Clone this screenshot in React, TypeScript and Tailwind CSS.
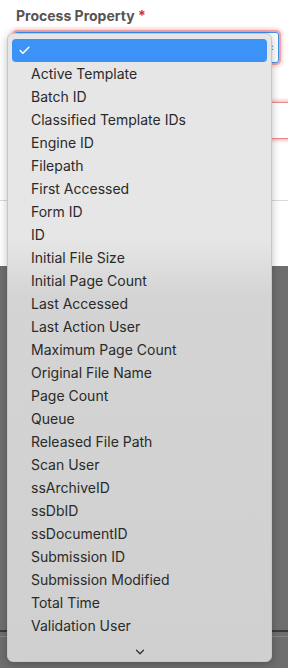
import { Check, ChevronDown } from "lucide-react";

const options = [
  "Active Template",
  "Batch ID",
  "Classified Template IDs",
  "Engine ID",
  "Filepath",
  "First Accessed",
  "Form ID",
  "ID",
  "Initial File Size",
  "Initial Page Count",
  "Last Accessed",
  "Last Action User",
  "Maximum Page Count",
  "Original File Name",
  "Page Count",
  "Queue",
  "Released File Path",
  "Scan User",
  "ssArchiveID",
  "ssDbID",
  "ssDocumentID",
  "Submission ID",
  "Submission Modified",
  "Total Time",
  "Validation User",
];

const App = () => {
  return (
    <div
      className="relative w-[288px] h-[668px] overflow-hidden bg-white flex flex-col"
      style={{ fontFamily: "Inter, 'Noto Sans', sans-serif" }}
    >
      {/* Form behind the menu */}
      <div className="flex flex-col">
        <div className="pt-[6px] pl-[16px] text-[14px] leading-[20px] font-bold text-[#555555]">
          Process Property <span className="text-[#e0302a]">*</span>
        </div>
        <div className="mt-[6px] ml-[14px] w-[265px] h-[31px] rounded-[3px] border border-[#3b8ef0] shadow-[0_0_0_2px_#f3a3a6,0_0_4px_3px_#f7c4c6] flex items-center justify-end pr-[3px]">
          <span className="text-[9px] text-[#333]">⬍</span>
        </div>
        <div className="mt-[39px] ml-[14px] w-[290px] h-[37px] border-y border-[#e98a8f] shadow-[0_0_3px_2px_#f7c4c6]" />
        <div className="mt-[61px] h-px bg-[#d9d9d9]" />
      </div>
      <div className="h-[65px] bg-white" />
      <div className="flex-1 bg-[#6e6e6e] flex flex-col">
        <div className="h-[364px]" />
        <div className="h-[2px] bg-[#3a3a3a]" />
        <div className="h-[4px]" />
        <div className="h-px bg-[#868686]" />
      </div>

      {/* Popup menu */}
      <div className="absolute left-[7px] top-[33px] w-[265px] h-[629px] rounded-[6px] border border-[#c6c6c6] bg-[linear-gradient(to_bottom,#e5e6e5_0px,#e5e6e5_205px,#d3d4d3_262px,#cfd0cf_100%)] shadow-[0_2px_8px_rgba(0,0,0,0.25)] px-[4px] pt-[5px] flex flex-col">
        <div className="h-[23px] rounded-[4px] bg-[#3b92f7] flex items-center pl-[6px]">
          <Check className="w-[13px] h-[13px] text-white" strokeWidth={3} />
        </div>
        {options.map((o) => (
          <div
            key={o}
            className="h-[23px] flex items-center pl-[19px] text-[14px] text-[#2a2a2a] whitespace-nowrap"
          >
            {o}
          </div>
        ))}
        <div className="h-[24px] pt-[6px] flex items-center justify-center">
          <ChevronDown className="w-[14px] h-[14px] text-[#333]" strokeWidth={2.2} />
        </div>
      </div>
    </div>
  );
};

export default App;
